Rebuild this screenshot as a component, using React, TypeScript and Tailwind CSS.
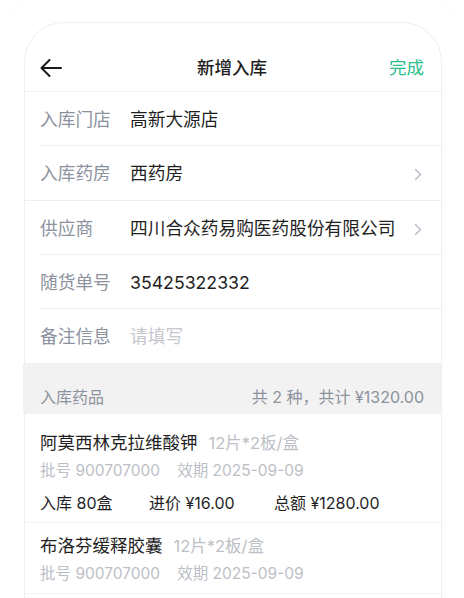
import React from "react";

function Chevron() {
  return (
    <svg width="8" height="13" viewBox="0 0 8 13" fill="none" className="shrink-0">
      <path d="M1.5 1.5 L6.5 6.5 L1.5 11.5" stroke="#b3bac6" strokeWidth="1.4" strokeLinecap="round" strokeLinejoin="round" />
    </svg>
  );
}

function Row({
  label,
  value,
  placeholder,
  chevron,
  fullDivider,
  noDivider,
}: {
  label: string;
  value?: string;
  placeholder?: string;
  chevron?: boolean;
  fullDivider?: boolean;
  noDivider?: boolean;
}) {
  return (
    <div className={fullDivider ? "pl-[15px] border-b border-[#eeeeee]" : "pl-[15px]"}>
      <div
        className={
          "flex items-center h-[54px] pt-[3px] pr-[19px] " +
          (fullDivider || noDivider ? "" : "border-b border-[#eeeeee]")
        }
      >
        <div className="w-[90px] shrink-0 text-[17.7px] text-[#8b929e]">{label}</div>
        <div className="flex-1 text-[17.7px]">
          {value ? (
            <span className="text-[#1f1f1f]">{value}</span>
          ) : (
            <span className="text-[#c4c7cc]">{placeholder}</span>
          )}
        </div>
        {chevron && <Chevron />}
      </div>
    </div>
  );
}

function Item({
  name,
  spec,
  batch,
  expiry,
  detail,
  pt,
}: {
  name: string;
  spec: string;
  batch: string;
  expiry: string;
  detail?: { qty: string; price: string; total: string };
  pt: string;
}) {
  return (
    <div className={"pl-[15px] pr-[16px] pb-[7px] border-b border-[#f3f3f3] " + pt}>
      <div className="flex items-baseline gap-[11px] leading-[24px]">
        <span className="text-[17.5px] text-[#1f1f1f]">{name}</span>
        <span className="text-[16.5px] text-[#bcc0c6]">{spec}</span>
      </div>
      <div className="flex gap-[17px] mt-[4px] leading-[24px] text-[15.5px] text-[#bcc0c6]">
        <span>批号 {batch}</span>
        <span>效期 {expiry}</span>
      </div>
      {detail && (
        <div className="flex mt-[8px] leading-[24px] text-[16px] text-[#1f1f1f]">
          <span className="w-[109px]">入库 {detail.qty}</span>
          <span className="w-[125px]">进价 {detail.price}</span>
          <span>总额 {detail.total}</span>
        </div>
      )}
    </div>
  );
}

export default function App() {
  return (
    <div className="w-[464px] h-[598px] overflow-hidden bg-white font-['Inter','Noto_Sans_CJK_SC',sans-serif]">
      <div className="mt-[-20px] mx-[2px] h-[700px] rounded-[64px] border-t border-[#f2f2f2] pt-[41px] pl-[22px]">
        <div className="w-[418px] h-[700px] rounded-t-[40px] border border-[#eeeeee] bg-white">
          {/* header */}
          <div className="h-[69px] pt-[22px] grid grid-cols-[1fr_auto_1fr] items-center border-b border-[#f2f2f2] pl-[15px] pr-[17px]">
            <div className="flex items-center">
              <svg width="22" height="18" viewBox="0 0 22 18" fill="none">
                <path d="M21 9 H1.5 M9.5 1 L1.5 9 L9.5 17" stroke="#1a1a1a" strokeWidth="2" strokeLinecap="round" strokeLinejoin="round" />
              </svg>
            </div>
            <div className="text-[17.5px] font-medium text-[#1f1f1f]">新增入库</div>
            <div className="flex justify-end text-[17.5px] text-[#29c08c]">完成</div>
          </div>

          <Row label="入库门店" value="高新大源店" />
          <Row label="入库药房" value="西药房" chevron fullDivider />
          <Row label="供应商" value="四川合众药易购医药股份有限公司" chevron />
          <Row label="随货单号" value="35425322332" />
          <Row label="备注信息" placeholder="请填写" noDivider />

          <div className="h-[51px] -ml-[2px] bg-[#f2f2f2] flex items-end justify-between pb-[7px] pl-[17px] pr-[17px] leading-[20px] text-[16px] text-[#8b929e]">
            <span>入库药品</span>
            <span>共 2 种，共计 ¥1320.00</span>
          </div>

          <Item
            pt="pt-[17px]"
            name="阿莫西林克拉维酸钾"
            spec="12片*2板/盒"
            batch="900707000"
            expiry="2025-09-09"
            detail={{ qty: "80盒", price: "¥16.00", total: "¥1280.00" }}
          />
          <Item
            pt="pt-[11px]"
            name="布洛芬缓释胶囊"
            spec="12片*2板/盒"
            batch="900707000"
            expiry="2025-09-09"
          />
        </div>
      </div>
    </div>
  );
}
